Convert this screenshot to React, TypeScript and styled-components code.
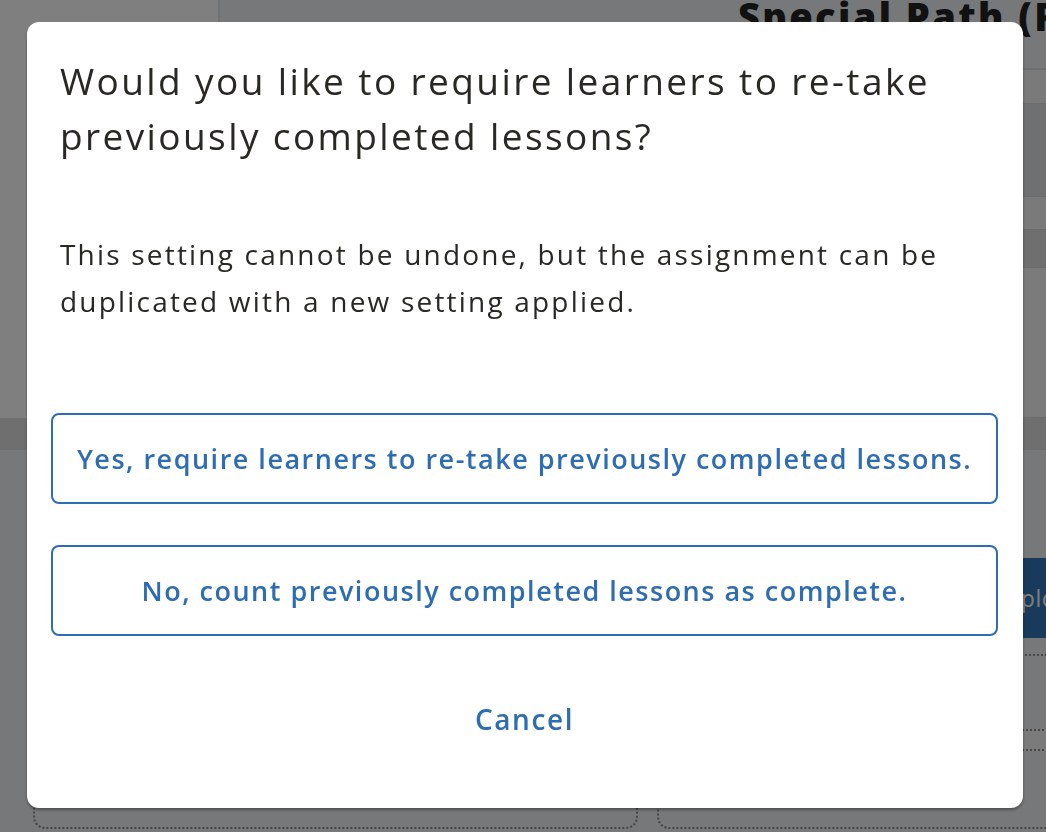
import React from 'react';
import styled, { createGlobalStyle } from 'styled-components';

const GlobalStyle = createGlobalStyle`
    html, body {
        margin: 0;
        padding: 0;
        background: #eef0f3;
        font-family: "Open Sans", Lato, sans-serif;
    }
`;

const Page = styled.div`
    width: 1046px;
    height: 832px;
    overflow: hidden;
    background: #eef0f3;
`;

const Top = styled.div`
    display: flex;
    height: 418px;
`;

const Sidebar = styled.div`
    width: 218px;
    background: #ffffff;
    border-right: 2px solid #e4e4e4;
    flex-shrink: 0;
`;

const Main = styled.div`
    flex: 1;
    display: flex;
    flex-direction: column;
    min-width: 0;
    overflow: hidden;
`;

const Heading = styled.h1`
    margin: -6px 0 0 0;
    height: 76px;
    padding-left: 518px;
    font-size: 38px;
    font-weight: 800;
    line-height: 44px;
    letter-spacing: 2.4px;
    color: #222;
    white-space: nowrap;
    border-bottom: 2px solid #dcdcdc;
    box-sizing: border-box;
`;

const Row = styled.div<{ $h: number; $bg: string }>`
    height: ${(p) => p.$h}px;
    background: ${(p) => p.$bg};
    border-bottom: 1px solid #d8d8d8;
    box-sizing: border-box;
`;

const Band = styled.div`
    height: 32px;
    background: #dedfe1;
`;

const Content = styled.div`
    display: flex;
    flex-direction: column;
    align-items: flex-end;
    padding-top: 108px;
`;

const ActionButton = styled.div`
    width: 300px;
    margin-right: -40px;
    height: 80px;
    background: #3474b6;
    color: #fff;
    font-size: 23px;
    letter-spacing: 0.5px;
    display: flex;
    align-items: center;
    padding-left: 209px;
    box-sizing: border-box;
    white-space: nowrap;
`;

const Cards = styled.div`
    display: flex;
    gap: 19px;
    padding: 16px 0 0 33px;
    width: 100%;
    box-sizing: border-box;
`;

const Card = styled.div<{ $wide?: boolean }>`
    flex: ${(p) => (p.$wide ? '0 0 605px' : '0 0 500px')};
    height: 175px;
    border: 2px dotted #8e8e8e;
    border-radius: 12px;
    box-sizing: border-box;
    display: flex;
    flex-direction: column;
    justify-content: flex-end;
`;

const CardDivider = styled.div`
    height: 18px;
    margin-bottom: 76px;
    border-top: 2px dotted #8e8e8e;
    border-bottom: 2px dotted #8e8e8e;
    background: #f6f6f6;
`;

const Overlay = styled.div`
    position: fixed;
    inset: 0;
    background: rgba(0, 0, 0, 0.5);
    padding: 22px 23px 24px 27px;
    box-sizing: border-box;
`;

const Modal = styled.div`
    height: 100%;
    background: #ffffff;
    border-radius: 12px;
    box-shadow: 0 2px 3px rgba(0, 0, 0, 0.35);
    padding: 31px 25px 0 24px;
    box-sizing: border-box;
    display: flex;
    flex-direction: column;
`;

const Title = styled.h2`
    margin: 0 0 0 9px;
    font-size: 37px;
    line-height: 55px;
    font-weight: 400;
    letter-spacing: 2.4px;
    color: #292824;
`;

const Body = styled.p`
    margin: 68px 0 0 9px;
    font-size: 28px;
    line-height: 47px;
    letter-spacing: 2.2px;
    color: #292824;
`;

const Choices = styled.div`
    display: flex;
    flex-direction: column;
    gap: 41px;
    margin-top: 88px;
`;

const Choice = styled.button`
    height: 91px;
    padding: 0;
    background: #fff;
    border: 2px solid #2e6db4;
    border-radius: 8px;
    color: #2e6db4;
    font-family: inherit;
    font-size: 27px;
    font-weight: 600;
    letter-spacing: 1.5px;
    cursor: pointer;
`;

const Cancel = styled.button`
    align-self: center;
    margin-top: 63px;
    background: none;
    border: none;
    color: #2e6db4;
    font-family: inherit;
    font-size: 28px;
    font-weight: 600;
    letter-spacing: 1.6px;
    cursor: pointer;
`;

export default function App(): JSX.Element {
    return (
        <>
            <GlobalStyle />
            <Page>
                <Top>
                    <Sidebar />
                    <Main>
                        <Heading>Special Path (Required)</Heading>
                        <Row $h={34} $bg="#f4f4f4" />
                        <Row $h={93} $bg="#dfe0e3" />
                        <Row $h={33} $bg="#f4f4f4" />
                        <Row $h={38} $bg="#dedfe1" />
                        <Row $h={150} $bg="#f6f6f6" />
                    </Main>
                </Top>
                <Band />
                <Content>
                    <ActionButton>Explore</ActionButton>
                    <Cards>
                        <Card $wide />
                        <Card>
                            <CardDivider />
                        </Card>
                    </Cards>
                </Content>
            </Page>
            <Overlay>
                <Modal>
                    <Title>Would you like to require learners to re-take previously completed lessons?</Title>
                    <Body>This setting cannot be undone, but the assignment can be duplicated with a new setting applied.</Body>
                    <Choices>
                        <Choice>Yes, require learners to re-take previously completed lessons.</Choice>
                        <Choice>No, count previously completed lessons as complete.</Choice>
                    </Choices>
                    <Cancel>Cancel</Cancel>
                </Modal>
            </Overlay>
        </>
    );
}
